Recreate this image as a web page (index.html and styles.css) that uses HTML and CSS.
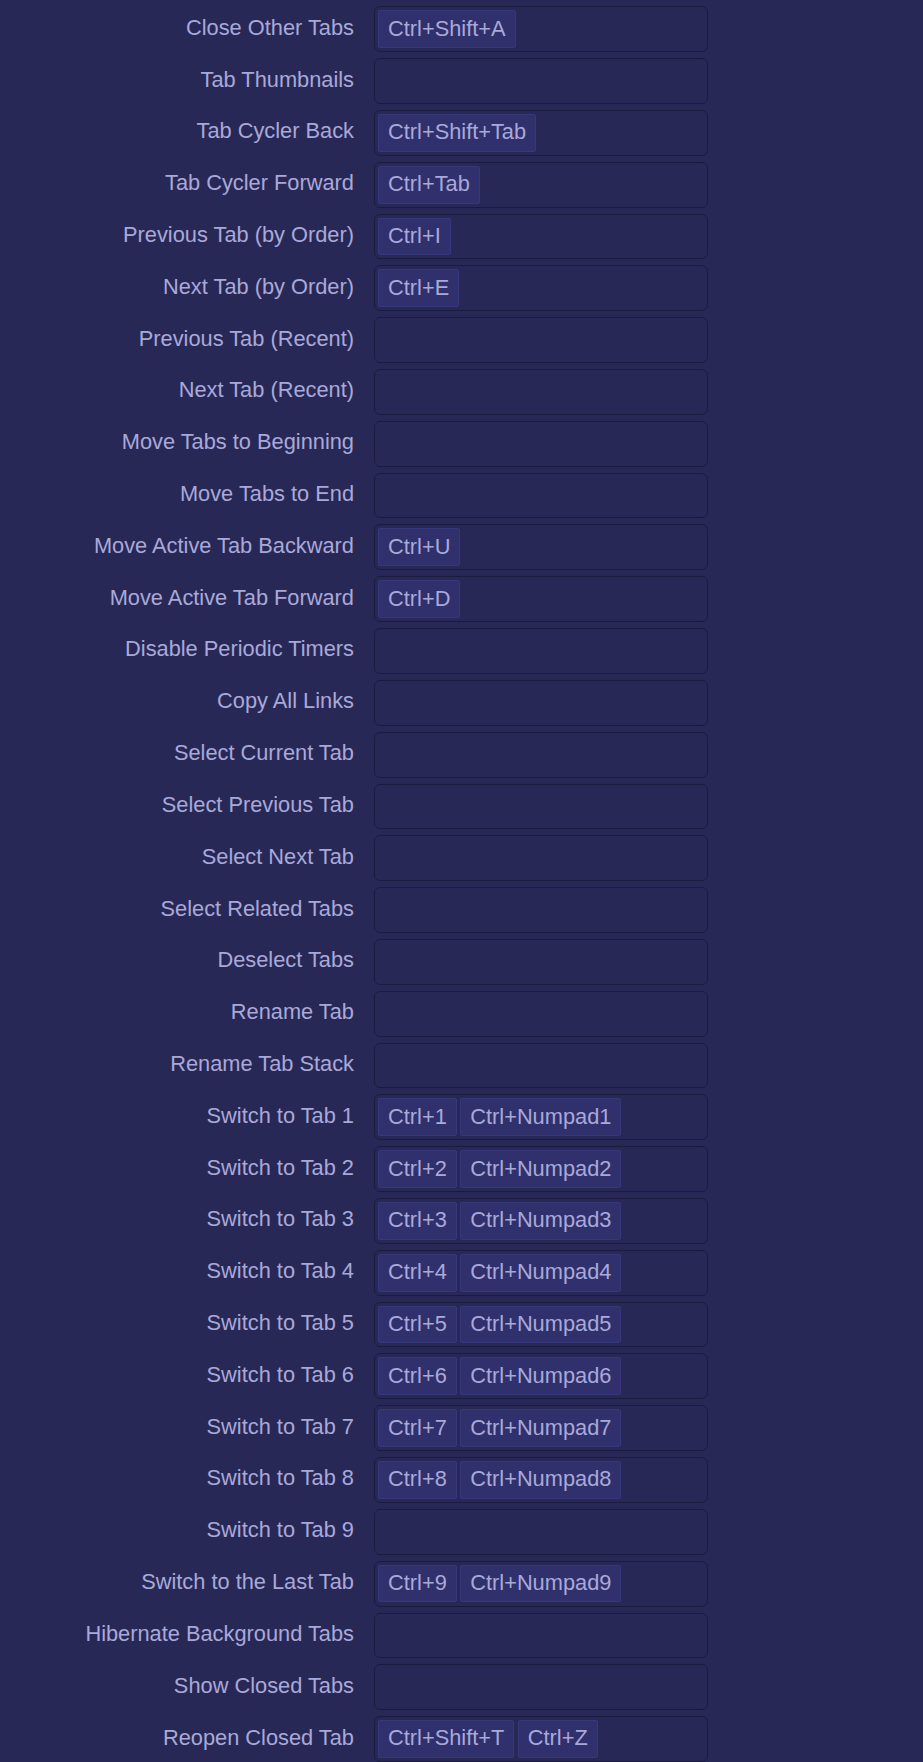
FILE: index.html
```html
<!DOCTYPE html>
<html lang="en">
<head>
<meta charset="utf-8">
<title>Keyboard Shortcuts</title>
<link rel="stylesheet" href="styles.css">
</head>
<body>
<div class="shortcuts">
  <div class="row"><span class="label"></span><div class="field"></div></div>
  <div class="row"><span class="label">Close Other Tabs</span><div class="field"><span class="key">Ctrl+Shift+A</span></div></div>
  <div class="row"><span class="label">Tab Thumbnails</span><div class="field"></div></div>
  <div class="row"><span class="label">Tab Cycler Back</span><div class="field"><span class="key">Ctrl+Shift+Tab</span></div></div>
  <div class="row"><span class="label">Tab Cycler Forward</span><div class="field"><span class="key">Ctrl+Tab</span></div></div>
  <div class="row"><span class="label">Previous Tab (by Order)</span><div class="field"><span class="key">Ctrl+I</span></div></div>
  <div class="row"><span class="label">Next Tab (by Order)</span><div class="field"><span class="key">Ctrl+E</span></div></div>
  <div class="row"><span class="label">Previous Tab (Recent)</span><div class="field"></div></div>
  <div class="row"><span class="label">Next Tab (Recent)</span><div class="field"></div></div>
  <div class="row"><span class="label">Move Tabs to Beginning</span><div class="field"></div></div>
  <div class="row"><span class="label">Move Tabs to End</span><div class="field"></div></div>
  <div class="row"><span class="label">Move Active Tab Backward</span><div class="field"><span class="key">Ctrl+U</span></div></div>
  <div class="row"><span class="label">Move Active Tab Forward</span><div class="field"><span class="key">Ctrl+D</span></div></div>
  <div class="row"><span class="label">Disable Periodic Timers</span><div class="field"></div></div>
  <div class="row"><span class="label">Copy All Links</span><div class="field"></div></div>
  <div class="row"><span class="label">Select Current Tab</span><div class="field"></div></div>
  <div class="row"><span class="label">Select Previous Tab</span><div class="field"></div></div>
  <div class="row"><span class="label">Select Next Tab</span><div class="field"></div></div>
  <div class="row"><span class="label">Select Related Tabs</span><div class="field"></div></div>
  <div class="row"><span class="label">Deselect Tabs</span><div class="field"></div></div>
  <div class="row"><span class="label">Rename Tab</span><div class="field"></div></div>
  <div class="row"><span class="label">Rename Tab Stack</span><div class="field"></div></div>
  <div class="row"><span class="label">Switch to Tab 1</span><div class="field"><span class="key">Ctrl+1</span><span class="key">Ctrl+Numpad1</span></div></div>
  <div class="row"><span class="label">Switch to Tab 2</span><div class="field"><span class="key">Ctrl+2</span><span class="key">Ctrl+Numpad2</span></div></div>
  <div class="row"><span class="label">Switch to Tab 3</span><div class="field"><span class="key">Ctrl+3</span><span class="key">Ctrl+Numpad3</span></div></div>
  <div class="row"><span class="label">Switch to Tab 4</span><div class="field"><span class="key">Ctrl+4</span><span class="key">Ctrl+Numpad4</span></div></div>
  <div class="row"><span class="label">Switch to Tab 5</span><div class="field"><span class="key">Ctrl+5</span><span class="key">Ctrl+Numpad5</span></div></div>
  <div class="row"><span class="label">Switch to Tab 6</span><div class="field"><span class="key">Ctrl+6</span><span class="key">Ctrl+Numpad6</span></div></div>
  <div class="row"><span class="label">Switch to Tab 7</span><div class="field"><span class="key">Ctrl+7</span><span class="key">Ctrl+Numpad7</span></div></div>
  <div class="row"><span class="label">Switch to Tab 8</span><div class="field"><span class="key">Ctrl+8</span><span class="key">Ctrl+Numpad8</span></div></div>
  <div class="row"><span class="label">Switch to Tab 9</span><div class="field"></div></div>
  <div class="row"><span class="label">Switch to the Last Tab</span><div class="field"><span class="key">Ctrl+9</span><span class="key">Ctrl+Numpad9</span></div></div>
  <div class="row"><span class="label">Hibernate Background Tabs</span><div class="field"></div></div>
  <div class="row"><span class="label">Show Closed Tabs</span><div class="field"></div></div>
  <div class="row"><span class="label">Reopen Closed Tab</span><div class="field"><span class="key">Ctrl+Shift+T</span><span class="key">Ctrl+Z</span></div></div>
</div>
</body>
</html>
```

FILE: styles.css
```css
html, body {
  margin: 0;
  padding: 0;
  background: #282856;
}

body {
  font-family: "Liberation Sans", Arial, sans-serif;
  font-size: 21.8px;
  color: #a9a9d9;
  overflow: hidden;
}

.shortcuts {
  display: flex;
  flex-direction: column;
  gap: 6px;
  margin-top: -45.5px;
}

.row {
  display: grid;
  grid-template-columns: 354px 334px;
  column-gap: 20px;
  align-items: center;
}

.label {
  text-align: right;
  white-space: nowrap;
  line-height: 1.15;
  padding-bottom: 4px;
}

.field {
  box-sizing: border-box;
  height: 45.82px;
  border: 1px solid #1b1b40;
  border-radius: 6px;
  padding: 3px;
  display: flex;
  align-items: center;
  gap: 3.5px;
}

.key {
  box-sizing: border-box;
  height: 37.8px;
  display: flex;
  align-items: center;
  padding: 0 9px 2px;
  background: #30306c;
  border: 1px solid #37377b;
  border-radius: 2px;
  line-height: 1.15;
  white-space: nowrap;
}
```
